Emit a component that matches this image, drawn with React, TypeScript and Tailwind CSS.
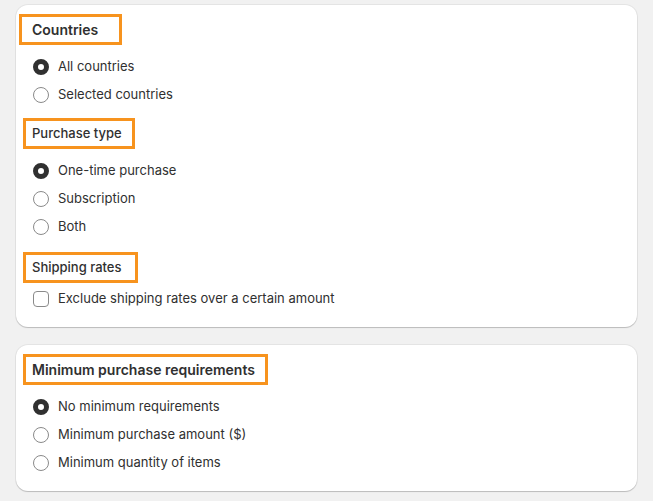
import React from "react";

const Radio = ({ checked, label }: { checked?: boolean; label: string }) => (
  <label className="flex items-center gap-[9px] h-[28px]">
    {checked ? (
      <span className="w-[16px] h-[16px] rounded-full border-[5px] border-[#303030] bg-white box-border" />
    ) : (
      <span className="w-[16px] h-[16px] rounded-full border border-[#8a8a8a] bg-white box-border" />
    )}
    <span className="text-[13px] text-[#303030]">{label}</span>
  </label>
);

const Heading = ({ children, bold, wide }: { children: React.ReactNode; bold?: boolean; wide?: boolean }) => (
  <div
    className={`inline-flex items-center h-[31px] border-[3px] border-[#f7931e] pl-[6px] text-[#303030] ${
      wide ? "pr-[14px]" : "pr-[10px]"
    } ${bold ? "text-[14px] font-semibold" : "text-[13px] font-medium"}`}
  >
    {children}
  </div>
);

export default function App() {
  return (
    <div
      className="w-[653px] h-[501px] bg-[#f1f1f1] pl-[16px] pt-[5px] overflow-hidden"
      style={{ fontFamily: "Inter, 'Noto Sans', sans-serif" }}
    >
      <div className="w-[621px] h-[322px] bg-white rounded-[12px] shadow-[0_1px_1px_rgba(0,0,0,0.18),0_0_0_1px_rgba(0,0,0,0.05)] pt-[9px] pl-[7px]">
        <div className="-ml-[4px] w-fit">
          <div className="inline-flex items-center h-[31px] border-[3px] border-[#f7931e] pl-[10px] pr-[21px] text-[#303030] text-[14px] font-semibold">
            Countries
          </div>
        </div>
        <div className="pl-[10px] mt-[8px]">
          <Radio checked label="All countries" />
          <Radio label="Selected countries" />
        </div>
        <div className="mt-[9px]">
          <Heading>Purchase type</Heading>
        </div>
        <div className="pl-[10px] mt-[8px]">
          <Radio checked label="One-time purchase" />
          <Radio label="Subscription" />
          <Radio label="Both" />
        </div>
        <div className="mt-[11px]">
          <Heading wide>Shipping rates</Heading>
        </div>
        <label className="flex items-center gap-[9px] pl-[10px] mt-[5px] h-[22px]">
          <span className="w-[16px] h-[16px] rounded-[4px] border border-[#8a8a8a] bg-white box-border" />
          <span className="text-[13px] text-[#303030]">Exclude shipping rates over a certain amount</span>
        </label>
      </div>

      <div className="mt-[18px] w-[621px] h-[146px] bg-white rounded-[12px] shadow-[0_1px_1px_rgba(0,0,0,0.18),0_0_0_1px_rgba(0,0,0,0.05)] pt-[9px] pl-[7px]">
        <Heading bold>Minimum purchase requirements</Heading>
        <div className="pl-[10px] mt-[8px]">
          <Radio checked label="No minimum requirements" />
          <Radio label="Minimum purchase amount ($)" />
          <Radio label="Minimum quantity of items" />
        </div>
      </div>
    </div>
  );
}
